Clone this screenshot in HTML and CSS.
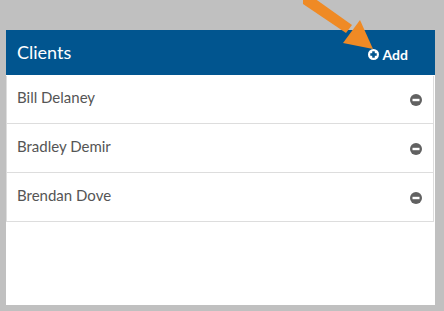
FILE: index.html
```html
<!DOCTYPE html>
<html lang="en">
<head>
  <meta charset="UTF-8">
  <title>Clients</title>
  <link rel="stylesheet" href="styles.css">
</head>
<body>
  <div class="panel">
    <div class="panel-heading">
      <h3>Clients</h3>
      <a class="add-btn" href="#">
        <svg class="icon" viewBox="0 0 12 12" width="11" height="11">
          <circle cx="6" cy="6" r="6" fill="#fff"/>
          <rect x="2.5" y="4.6" width="7" height="2.8" fill="#01558f"/>
          <rect x="4.6" y="2.5" width="2.8" height="7" fill="#01558f"/>
        </svg>Add
      </a>
    </div>

    <ul class="client-list">
      <li>Bill Delaney
        <svg class="icon" viewBox="0 0 12 12" width="12" height="12"><circle cx="6" cy="6" r="6" fill="#616161"/><rect x="2.5" y="4.8" width="7" height="2.4" fill="#fff"/></svg>
      </li>
      <li>Bradley Demir
        <svg class="icon" viewBox="0 0 12 12" width="12" height="12"><circle cx="6" cy="6" r="6" fill="#616161"/><rect x="2.5" y="4.8" width="7" height="2.4" fill="#fff"/></svg>
      </li>
      <li>Brendan Dove
        <svg class="icon" viewBox="0 0 12 12" width="12" height="12"><circle cx="6" cy="6" r="6" fill="#616161"/><rect x="2.5" y="4.8" width="7" height="2.4" fill="#fff"/></svg>
      </li>
    </ul>
  </div>

  <!-- callout arrow pointing at the Add button -->
  <svg class="arrow" viewBox="0 0 80 60" width="80" height="60">
    <polygon points="3,-2 14,-2 52,25 46,33 3,4" fill="#ef8a25"/>
    <polygon points="60,20 73,49 43,43" fill="#ef8a25"/>
  </svg>
</body>
</html>
```

FILE: styles.css
```css
body {
  font-family: Lato, "Open Sans", sans-serif;
  margin: 0;
  background-color: #c0c0c0;
  height: 311px;
  padding: 30px 0 0 6px;
  box-sizing: border-box;
  position: relative;
  overflow: hidden;
}

.panel {
  width: 429px;
  height: 275px;
  background: #fff;
}

.panel-heading {
  height: 45px;
  background-color: #01558f;
  display: flex;
  align-items: center;
  justify-content: space-between;
  padding: 0 27px 0 11px;
  color: #fff;
}

.panel-heading h3 {
  margin: 0;
  font-size: 18px;
  font-weight: normal;
  padding-bottom: 1px;
}

.add-btn {
  color: #fff;
  text-decoration: none;
  font-size: 14px;
  font-weight: bold;
  display: flex;
  align-items: center;
  gap: 4px;
  margin-top: 3px;
}

.client-list {
  list-style: none;
  margin: 0;
  padding: 1px 0 0;
}

.client-list li {
  height: 35px;
  padding: 13px 11px 0 10px;
  border: 1px solid #ddd;
  border-top: none;
  margin-right: 1px;
  display: flex;
  align-items: flex-start;
  justify-content: space-between;
  font-size: 15px;
  line-height: 18px;
  color: #555;
}

.client-list li:first-child {
  padding-top: 12px;
}

.client-list li .icon {
  margin-top: 6px;
}

.arrow {
  position: absolute;
  left: 300px;
  top: 0;
}
```
